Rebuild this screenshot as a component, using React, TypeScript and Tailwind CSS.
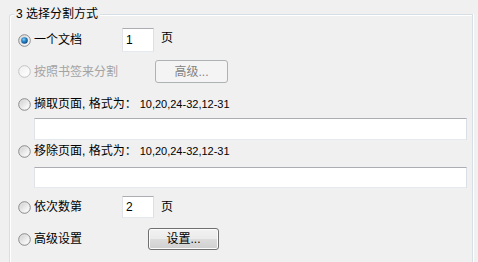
import type { ReactNode } from 'react';

type RadioState = 'checked' | 'off' | 'disabled';

function Radio({ state }: { state: RadioState }) {
  const id = `r-${state}`;
  const ring = state === 'disabled' ? '#c3c3c3' : '#8a8a8a';
  return (
    <svg width="13" height="13" viewBox="0 0 13 13" className="shrink-0">
      <defs>
        <linearGradient id={`${id}-bg`} x1="0" y1="0" x2="1" y2="1">
          <stop offset="0" stopColor={state === 'disabled' ? '#f2f2f2' : '#dadada'} />
          <stop offset="1" stopColor="#fcfcfc" />
        </linearGradient>
        <linearGradient id={`${id}-in`} x1="0" y1="0" x2="1" y2="1">
          <stop offset="0" stopColor={state === 'disabled' ? '#f0f0f0' : '#d2d2d2'} />
          <stop offset="1" stopColor="#ffffff" />
        </linearGradient>
        <radialGradient id={`${id}-dot`} cx="0.4" cy="0.35" r="0.7">
          <stop offset="0" stopColor="#7fd0f7" />
          <stop offset="0.45" stopColor="#2a86c8" />
          <stop offset="1" stopColor="#0b3f78" />
        </radialGradient>
      </defs>
      <circle cx="6.5" cy="6.5" r="5.8" fill={`url(#${id}-bg)`} stroke={ring} strokeWidth="1" />
      <circle cx="6.5" cy="6.5" r="4.2" fill={`url(#${id}-in)`} />
      {state === 'checked' && <circle cx="6.5" cy="6.5" r="3.3" fill={`url(#${id}-dot)`} />}
    </svg>
  );
}

function Option({
  state,
  width,
  children,
  className = '',
}: {
  state: RadioState;
  width?: string;
  children: ReactNode;
  className?: string;
}) {
  return (
    <div className={`flex items-center ${className}`}>
      <Radio state={state} />
      <span
        className={`ml-[3px] whitespace-nowrap ${width ?? ''} ${
          state === 'disabled' ? 'text-[#a3a3a3]' : 'text-black'
        }`}
      >
        {children}
      </span>
    </div>
  );
}

const inputCls =
  'bg-white border border-[#e2e3ea] border-t-[#abadb3] border-b-[#e3e9ef] border-r-[#dbdfe6] outline-none';

export default function App() {
  return (
    <div
      className="w-[478px] h-[262px] overflow-hidden bg-[#f0f0f0] pt-[14px] pl-[9px] pr-[5px] text-[12px] leading-none"
      style={{ fontFamily: '"Liberation Sans", "Noto Sans CJK SC", sans-serif' }}
    >
      {/* group box */}
      <div className="relative h-[260px] rounded-tl-[3px] border-t border-l border-r border-[#d5dfe5] shadow-[inset_1px_1px_0_#ffffff,1px_0_0_#ffffff] pl-[8px] pr-[6px] pt-[13px]">
        <span className="absolute left-[4px] top-[-8px] bg-[#f0f0f0] px-[2px] leading-[15px] text-black">
          3 选择分割方式
        </span>

        {/* 一个文档 */}
        <div className="flex items-center h-[24px]">
          <Option state="checked" width="w-[88px]">一个文档</Option>
          <input readOnly value="1" className={`${inputCls} w-[32px] h-[24px] pl-[3px] text-[12px]`} />
          <span className="ml-[7px] -mt-[4px]">页</span>
        </div>

        {/* 按照书签来分割 */}
        <div className="flex items-center h-[23px] mt-[8px]">
          <Option state="disabled" width="w-[121px]">按照书签来分割</Option>
          <button
            disabled
            className="w-[73px] h-[23px] rounded-[3px] border border-[#adb2b5] bg-[#f4f4f4] text-[#838383] text-[12px]"
          >
            高级...
          </button>
        </div>

        {/* 撷取页面 */}
        <div className="flex items-center h-[20px] mt-[11px]">
          <Option state="off">
            撷取页面, 格式为：
          </Option>
          <span className="ml-[3px] text-[11px]">10,20,24-32,12-31</span>
        </div>
        <input readOnly className={`${inputCls} block ml-[16px] w-[433px] h-[22px] mt-[4px]`} />

        {/* 移除页面 */}
        <div className="flex items-center h-[20px] mt-[1px]">
          <Option state="off">
            移除页面, 格式为：
          </Option>
          <span className="ml-[3px] text-[11px]">10,20,24-32,12-31</span>
        </div>
        <input readOnly className={`${inputCls} block ml-[16px] w-[433px] h-[21px] mt-[6px]`} />

        {/* 依次数第 */}
        <div className="flex items-center h-[22px] mt-[8px]">
          <Option state="off" width="w-[88px]">依次数第</Option>
          <input readOnly value="2" className={`${inputCls} w-[32px] h-[22px] pl-[3px] text-[12px]`} />
          <span className="ml-[7px]">页</span>
        </div>

        {/* 高级设置 */}
        <div className="flex items-center h-[22px] mt-[10px]">
          <Option state="off" width="w-[114px]">高级设置</Option>
          <button className="w-[71px] h-[22px] rounded-[3px] border border-[#707070] bg-[linear-gradient(#f2f2f2_0%,#ebebeb_50%,#dddddd_50%,#cfcfcf_100%)] text-black text-[12px] shadow-[inset_0_0_0_1px_#fcfcfc]">
            设置...
          </button>
        </div>
      </div>
    </div>
  );
}
